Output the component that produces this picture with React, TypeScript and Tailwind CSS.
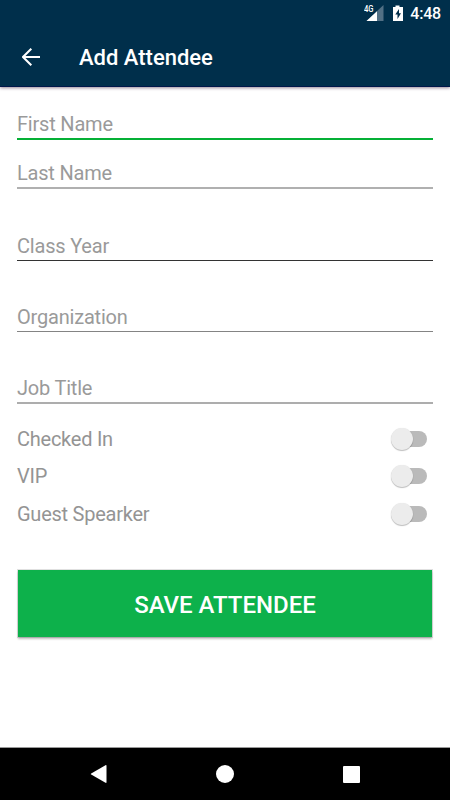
import { useState } from "react";

interface Field {
  name: string;
  label: string;
  box: string;
  line: string;
}

// box = space above + row height, line = underline of the input
const fields: Field[] = [
  { name: "firstName", label: "First Name", box: "mt-6 h-[29px] pt-px", line: "border-b-2 border-[#05b036]" },
  { name: "lastName", label: "Last Name", box: "mt-[21px] h-7", line: "border-b-2 border-[#b0b0b0]" },
  { name: "classYear", label: "Class Year", box: "mt-11 h-7 pt-px", line: "border-b border-[#333333]" },
  { name: "organization", label: "Organization", box: "mt-[43px] h-7 pt-px", line: "border-b border-[#848484]" },
  { name: "jobTitle", label: "Job Title", box: "mt-11 h-7", line: "border-b-2 border-[#adadad]" },
];

const toggles = ["Checked In", "VIP", "Guest Spearker"];

function StatusBar() {
  return (
    <div className="flex h-7 items-center justify-end pr-[9px] text-white">
      <svg width="20" height="18" viewBox="0 0 20 18" className="mr-2">
        <path d="M19.500 0v16h-17z" fill="#527085" />
        <path d="M13 6.200V16H2.500z" fill="#fff" />
        <text x="0" y="7.300" fontSize="9" fontWeight="500" fontFamily="Roboto, sans-serif" fill="#fff" textLength="9.500" lengthAdjust="spacingAndGlyphs">
          4G
        </text>
      </svg>
      <svg width="12" height="18" viewBox="0 0 12 18" className="mr-[6px]">
        <path d="M1 2h2.500V.5h4V2H11v14H1z" fill="#fff" />
        <path d="M7 4L3.300 9.500h2.200V14L9 8.300H7z" fill="#002d4a" />
      </svg>
      <span className="text-base leading-7 font-medium tracking-[-0.2px]">4:48</span>
    </div>
  );
}

function Toggle({ label }: { label: string }) {
  const [on, setOn] = useState(false);
  return (
    <div className="flex h-[37.500px] items-center justify-between pr-[6px]">
      <span className="mt-[2px] text-xl leading-6 tracking-[-0.25px]">{label}</span>
      <button
        type="button"
        role="switch"
        aria-checked={on}
        aria-label={label}
        onClick={() => setOn(!on)}
        className="relative mt-[2px] h-4 w-[35px] rounded-full bg-[#bababa]"
      >
        <span
          className={`absolute -top-[3px] size-[22px] rounded-full bg-[#ececec] shadow-[0_1px_1px_rgba(0,0,0,0.25),0_0_1px_rgba(0,0,0,0.1)] ${
            on ? "right-0" : "-left-px"
          }`}
        />
      </button>
    </div>
  );
}

export default function App() {
  const [values, setValues] = useState<Record<string, string>>({});

  return (
    <div className="flex h-[800px] w-[450px] flex-col bg-white font-[Roboto,sans-serif] text-[#949494]">
      <header className="h-[87px] shrink-0 border-b border-[#00174a] bg-[#002f4b] text-white shadow-[0_1px_3px_rgba(50,20,50,0.5)]">
        <StatusBar />
        <div className="flex h-[58px] items-center pl-[22px]">
          <button type="button" aria-label="Back">
            <svg width="18" height="18" viewBox="0 0 18 18" fill="none" stroke="#fff" strokeWidth="2">
              <path d="M18 9H1.400M9.300.7L1 9l8.300 8.300" />
            </svg>
          </button>
          <h1 className="ml-[39px] mt-[2px] text-[22px] leading-7 font-medium">Add Attendee</h1>
        </div>
      </header>

      <form className="flex-1 px-[17px]" onSubmit={(e) => e.preventDefault()}>
        {fields.map((field) => (
          <label key={field.name} className={`relative block ${field.box} ${field.line}`}>
            {!values[field.name] && (
              <span className="block text-xl leading-6 tracking-[-0.2px] text-[#9a9a9a]">{field.label}</span>
            )}
            <input
              name={field.name}
              value={values[field.name] ?? ""}
              onChange={(e) => setValues({ ...values, [field.name]: e.target.value })}
              className="absolute inset-0 w-full bg-transparent text-xl text-gray-800 outline-none"
            />
          </label>
        ))}

        <div className="mt-[15px]">
          {toggles.map((label) => (
            <Toggle key={label} label={label} />
          ))}
        </div>

        <button
          type="submit"
          className="mx-auto mt-[38px] flex h-[67px] w-[414px] items-center justify-center bg-[#0db14b] pt-[3px] text-2xl font-medium text-white shadow-[0_2px_2px_rgba(0,0,0,0.25),0_0_0_1px_rgba(0,0,0,0.12)]"
        >
          SAVE ATTENDEE
        </button>
      </form>

      <nav className="flex h-[53px] shrink-0 items-center justify-between border-t border-[#999999] bg-black pr-[90px] pl-[90px]">
        <svg width="17" height="20" viewBox="0 0 17 20" fill="#fff">
          <path d="M15.500 1.200c.6-.3 1 0 1 .6v16.400c0 .6-.4.900-1 .6L1.200 10.600c-.5-.3-.5-.9 0-1.200z" />
        </svg>
        <div className="size-[18px] rounded-full bg-white" />
        <div className="size-[17px] rounded-[1px] bg-white" />
      </nav>
    </div>
  );
}
